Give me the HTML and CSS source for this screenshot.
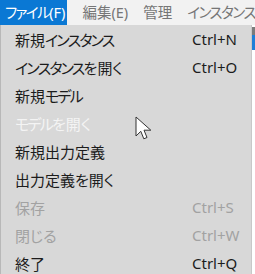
FILE: index.html
```html
<!DOCTYPE html>
<html lang="ja">
  <head>
    <meta charset="UTF-8" />
    <title>ファイル</title>
    <link rel="stylesheet" href="styles.css">
  </head>
  <body>
    <div id="menubar">
      <span class="top-item active"><span class="kana">ファイル</span>(F)</span>
      <span class="top-item">編集(E)</span>
      <span class="top-item">管理</span>
      <span class="top-item"><span class="kana">インスタンス</span>(</span>
    </div>

    <div id="area">
      <ul id="file-menu">
        <li class="entry"><span class="label">新規<span class="kana">インスタンス</span></span><span class="key">Ctrl+N</span></li>
        <li class="entry"><span class="label"><span class="kana">インスタンス</span>を開く</span><span class="key">Ctrl+O</span></li>
        <li class="entry"><span class="label">新規<span class="kana">モデル</span></span><span class="key"></span></li>
        <li class="entry faded"><span class="label"><span class="kana">モデル</span>を開く</span><span class="key"></span></li>
        <li class="entry"><span class="label">新規出力定義</span><span class="key"></span></li>
        <li class="entry"><span class="label">出力定義を開く</span><span class="key"></span></li>
        <li class="entry disabled"><span class="label">保存</span><span class="key">Ctrl+S</span></li>
        <li class="entry disabled"><span class="label">閉じる</span><span class="key">Ctrl+W</span></li>
        <li class="entry"><span class="label">終了</span><span class="key">Ctrl+Q</span></li>
      </ul>
      <div id="behind">
        <div class="strip gray"></div>
        <div class="strip blue"></div>
      </div>
    </div>

    <!-- mouse pointer -->
    <svg id="pointer" width="19" height="25" viewBox="0 0 19 25">
      <path d="M1 1 L1 20 L5.8 15.3 L8.8 22.8 L12 21.5 L9 14.2 L15.8 14.2 Z" fill="#fff" stroke="#333" stroke-width="1" stroke-linejoin="round" />
    </svg>
  </body>
</html>
```

FILE: styles.css
```css
body {
  margin: 0;
  background-color: #fff;
  font-family: "Noto Sans", "Noto Sans CJK JP", sans-serif;
  font-feature-settings: "palt";
  font-size: 15px;
  overflow: hidden;
  position: relative;
  width: 255px;
  height: 274px;
}

.kana {
  letter-spacing: -1.8px;
}

#menubar {
  display: flex;
  gap: 15px;
  height: 25px;
  background-color: #f2f2f2;
  font-size: 14.5px;
  white-space: nowrap;
  overflow: hidden;
}

#menubar .kana {
  letter-spacing: -1.5px;
}

.top-item {
  line-height: 25px;
  color: #767676;
}

.top-item.active {
  background-color: #0a78d4;
  color: #fff;
  padding: 0 2px 0 5px;
}

#area {
  display: flex;
}

#file-menu {
  list-style: none;
  margin: 0;
  padding: 0;
  width: 250px;
  height: 249px;
  background-color: #d8d8d8;
  border-left: 1px solid #b8b8b8;
  border-right: 1px solid #c8c8c8;
}

.entry {
  display: flex;
  align-items: center;
  height: 28px;
  color: #1c1c1c;
}

.entry .label {
  width: 177px;
  padding-left: 14px;
}

.entry.faded {
  color: #f4f4f4;
}

.entry.disabled {
  color: #a2a2a2;
}

#behind {
  flex: 1;
  padding-top: 2px;
}

.strip {
  width: 3px;
}

.strip.gray {
  height: 8px;
  background-color: #7b7b7b;
}

.strip.blue {
  height: 15px;
  background-color: #1f7fd8;
}

#pointer {
  position: absolute;
  left: 135px;
  top: 116px;
}
```
